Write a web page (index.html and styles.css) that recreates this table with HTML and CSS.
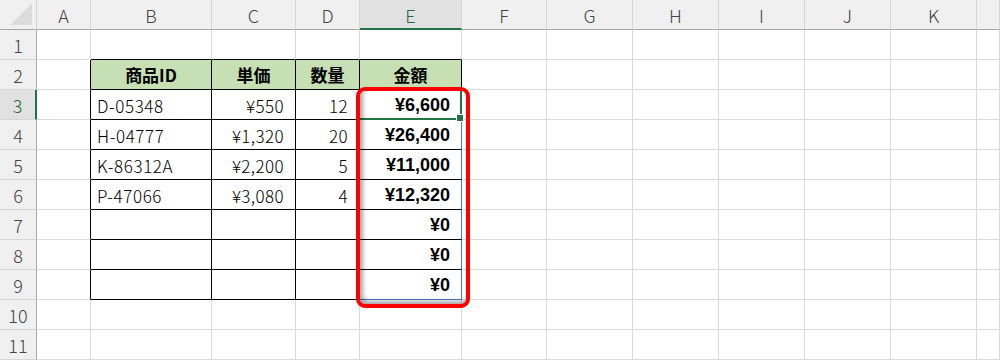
FILE: index.html
```html
<!DOCTYPE html>
<html lang="ja">
<head>
    <meta charset="UTF-8">
    <meta name="viewport" content="width=device-width, initial-scale=1.0">
    <title>金額の計算</title>
    <link rel="stylesheet" href="styles.css">
</head>
<body>
    <div class="sheet">
        <!-- column headers -->
        <div class="corner"><span class="tri"></span></div>
        <div class="colhead">A</div>
        <div class="colhead">B</div>
        <div class="colhead">C</div>
        <div class="colhead">D</div>
        <div class="colhead active">E</div>
        <div class="colhead">F</div>
        <div class="colhead">G</div>
        <div class="colhead">H</div>
        <div class="colhead">I</div>
        <div class="colhead">J</div>
        <div class="colhead">K</div>
        <div class="colhead"></div>

        <!-- row 1 -->
        <div class="rowhead">1</div>
        <div class="cell"></div>
        <div class="cell top-edge"></div>
        <div class="cell top-edge"></div>
        <div class="cell top-edge"></div>
        <div class="cell top-edge"></div>
        <div class="cell"></div>
        <div class="cell"></div>
        <div class="cell"></div>
        <div class="cell"></div>
        <div class="cell"></div>
        <div class="cell"></div>
        <div class="cell"></div>

        <!-- row 2 : table header -->
        <div class="rowhead">2</div>
        <div class="cell left-edge"></div>
        <div class="cell tb th">商品ID</div>
        <div class="cell tb th">単価</div>
        <div class="cell tb th">数量</div>
        <div class="cell tb th">金額</div>
        <div class="cell"></div>
        <div class="cell"></div>
        <div class="cell"></div>
        <div class="cell"></div>
        <div class="cell"></div>
        <div class="cell"></div>
        <div class="cell"></div>

        <!-- row 3 -->
        <div class="rowhead active">3</div>
        <div class="cell left-edge"></div>
        <div class="cell tb txt">D-05348</div>
        <div class="cell tb num">¥550</div>
        <div class="cell tb num">12</div>
        <div class="cell tb num total selected">¥6,600<span class="handle"></span></div>
        <div class="cell"></div>
        <div class="cell"></div>
        <div class="cell"></div>
        <div class="cell"></div>
        <div class="cell"></div>
        <div class="cell"></div>
        <div class="cell"></div>

        <!-- row 4 -->
        <div class="rowhead">4</div>
        <div class="cell left-edge"></div>
        <div class="cell tb txt">H-04777</div>
        <div class="cell tb num">¥1,320</div>
        <div class="cell tb num">20</div>
        <div class="cell tb num total">¥26,400</div>
        <div class="cell"></div>
        <div class="cell"></div>
        <div class="cell"></div>
        <div class="cell"></div>
        <div class="cell"></div>
        <div class="cell"></div>
        <div class="cell"></div>

        <!-- row 5 -->
        <div class="rowhead">5</div>
        <div class="cell left-edge"></div>
        <div class="cell tb txt">K-86312A</div>
        <div class="cell tb num">¥2,200</div>
        <div class="cell tb num">5</div>
        <div class="cell tb num total">¥11,000</div>
        <div class="cell"></div>
        <div class="cell"></div>
        <div class="cell"></div>
        <div class="cell"></div>
        <div class="cell"></div>
        <div class="cell"></div>
        <div class="cell"></div>

        <!-- row 6 -->
        <div class="rowhead">6</div>
        <div class="cell left-edge"></div>
        <div class="cell tb txt">P-47066</div>
        <div class="cell tb num">¥3,080</div>
        <div class="cell tb num">4</div>
        <div class="cell tb num total">¥12,320</div>
        <div class="cell"></div>
        <div class="cell"></div>
        <div class="cell"></div>
        <div class="cell"></div>
        <div class="cell"></div>
        <div class="cell"></div>
        <div class="cell"></div>

        <!-- row 7 -->
        <div class="rowhead">7</div>
        <div class="cell left-edge"></div>
        <div class="cell tb"></div>
        <div class="cell tb"></div>
        <div class="cell tb"></div>
        <div class="cell tb num total">¥0</div>
        <div class="cell"></div>
        <div class="cell"></div>
        <div class="cell"></div>
        <div class="cell"></div>
        <div class="cell"></div>
        <div class="cell"></div>
        <div class="cell"></div>

        <!-- row 8 -->
        <div class="rowhead">8</div>
        <div class="cell left-edge"></div>
        <div class="cell tb"></div>
        <div class="cell tb"></div>
        <div class="cell tb"></div>
        <div class="cell tb num total">¥0</div>
        <div class="cell"></div>
        <div class="cell"></div>
        <div class="cell"></div>
        <div class="cell"></div>
        <div class="cell"></div>
        <div class="cell"></div>
        <div class="cell"></div>

        <!-- row 9 -->
        <div class="rowhead">9</div>
        <div class="cell left-edge"></div>
        <div class="cell tb"></div>
        <div class="cell tb"></div>
        <div class="cell tb"></div>
        <div class="cell tb num total last">¥0</div>
        <div class="cell"></div>
        <div class="cell"></div>
        <div class="cell"></div>
        <div class="cell"></div>
        <div class="cell"></div>
        <div class="cell"></div>
        <div class="cell"></div>

        <!-- row 10 -->
        <div class="rowhead">10</div>
        <div class="cell"></div>
        <div class="cell"></div>
        <div class="cell"></div>
        <div class="cell"></div>
        <div class="cell"></div>
        <div class="cell"></div>
        <div class="cell"></div>
        <div class="cell"></div>
        <div class="cell"></div>
        <div class="cell"></div>
        <div class="cell"></div>
        <div class="cell"></div>

        <!-- row 11 -->
        <div class="rowhead">11</div>
        <div class="cell"></div>
        <div class="cell"></div>
        <div class="cell"></div>
        <div class="cell"></div>
        <div class="cell"></div>
        <div class="cell"></div>
        <div class="cell"></div>
        <div class="cell"></div>
        <div class="cell"></div>
        <div class="cell"></div>
        <div class="cell"></div>
        <div class="cell"></div>

        <!-- highlight around the 金額 column -->
        <div class="callout"></div>
    </div>
</body>
</html>
```

FILE: styles.css
```css
* {
    box-sizing: border-box;
}

body {
    margin: 0;
    background: #ffffff;
    font-family: "Noto Sans CJK JP", "Noto Sans", sans-serif;
    color: #000;
}

.sheet {
    position: relative;
    display: grid;
    grid-template-columns: 37px 54px 121px 84px 64px 102px 85px 86px 86px 86px 86px 86px 1fr;
    grid-template-rows: 30px repeat(11, 30px);
    width: 1000px;
    height: 360px;
    overflow: hidden;
}

/* headers */
.corner,
.colhead,
.rowhead {
    background: #f0f0f0;
    color: #444444;
    font-size: 18px;
    font-weight: 300;
    display: flex;
    align-items: center;
    justify-content: center;
}

.corner {
    position: relative;
    border-right: 1px solid #d6d6d6;
    border-bottom: 1px solid #a8a8a8;
}

.corner .tri {
    position: absolute;
    right: 4px;
    bottom: 4px;
    width: 0;
    height: 0;
    border-left: 22px solid transparent;
    border-bottom: 22px solid #dcdcdc;
}

.colhead {
    border-right: 1px solid #d6d6d6;
    border-bottom: 1px solid #a8a8a8;
    padding-top: 1px;
}

.colhead.active {
    background: #e1e1e1;
    color: #1e6b3f;
    border-bottom: 2px solid #217346;
}

.rowhead {
    border-right: 1px solid #a8a8a8;
    border-bottom: 1px solid #d6d6d6;
}

.rowhead.active {
    background: #e1e1e1;
    color: #1e6b3f;
    border-right: 2px solid #217346;
}

/* cells */
.cell {
    position: relative;
    border-right: 1px solid #dadada;
    border-bottom: 1px solid #dadada;
    display: flex;
    align-items: center;
    font-size: 16px;
    white-space: nowrap;
}

.cell.top-edge {
    border-bottom-color: #000;
}

.cell.left-edge {
    border-right-color: #000;
}

.cell.tb {
    border-right-color: #000;
    border-bottom-color: #000;
}

.cell.th {
    background: #c6e0b4;
    justify-content: center;
    font-weight: bold;
    font-size: 17px;
}

.cell.txt {
    padding-left: 6px;
    padding-top: 2px;
    font-weight: 300;
    font-size: 17px;
    letter-spacing: 0.6px;
}

.cell.num {
    justify-content: flex-end;
    padding-right: 11px;
    padding-top: 2px;
    font-weight: 300;
    font-size: 17px;
    letter-spacing: 0.4px;
}

.cell.total {
    font-family: "Liberation Sans", Arial, sans-serif;
    font-weight: bold;
    font-size: 18px;
    letter-spacing: 0;
    border-right-color: #4a78c9;
}

.cell.total.last {
    border-bottom-color: #4a78c9;
}

.cell.selected {
    border-right: 2px solid #217346;
    border-bottom: 2px solid #217346;
    padding-right: 10px;
}

.handle {
    position: absolute;
    right: -4px;
    bottom: -4px;
    width: 6px;
    height: 6px;
    background: #217346;
    border: 1px solid #ffffff;
    box-sizing: content-box;
    z-index: 2;
}

.callout {
    position: absolute;
    left: 356px;
    top: 87px;
    width: 114px;
    height: 221px;
    border: 4px solid #ff0000;
    border-radius: 9px;
    box-shadow: inset 3px -3px 4px rgba(0, 0, 0, 0.35);
    z-index: 3;
}
```
